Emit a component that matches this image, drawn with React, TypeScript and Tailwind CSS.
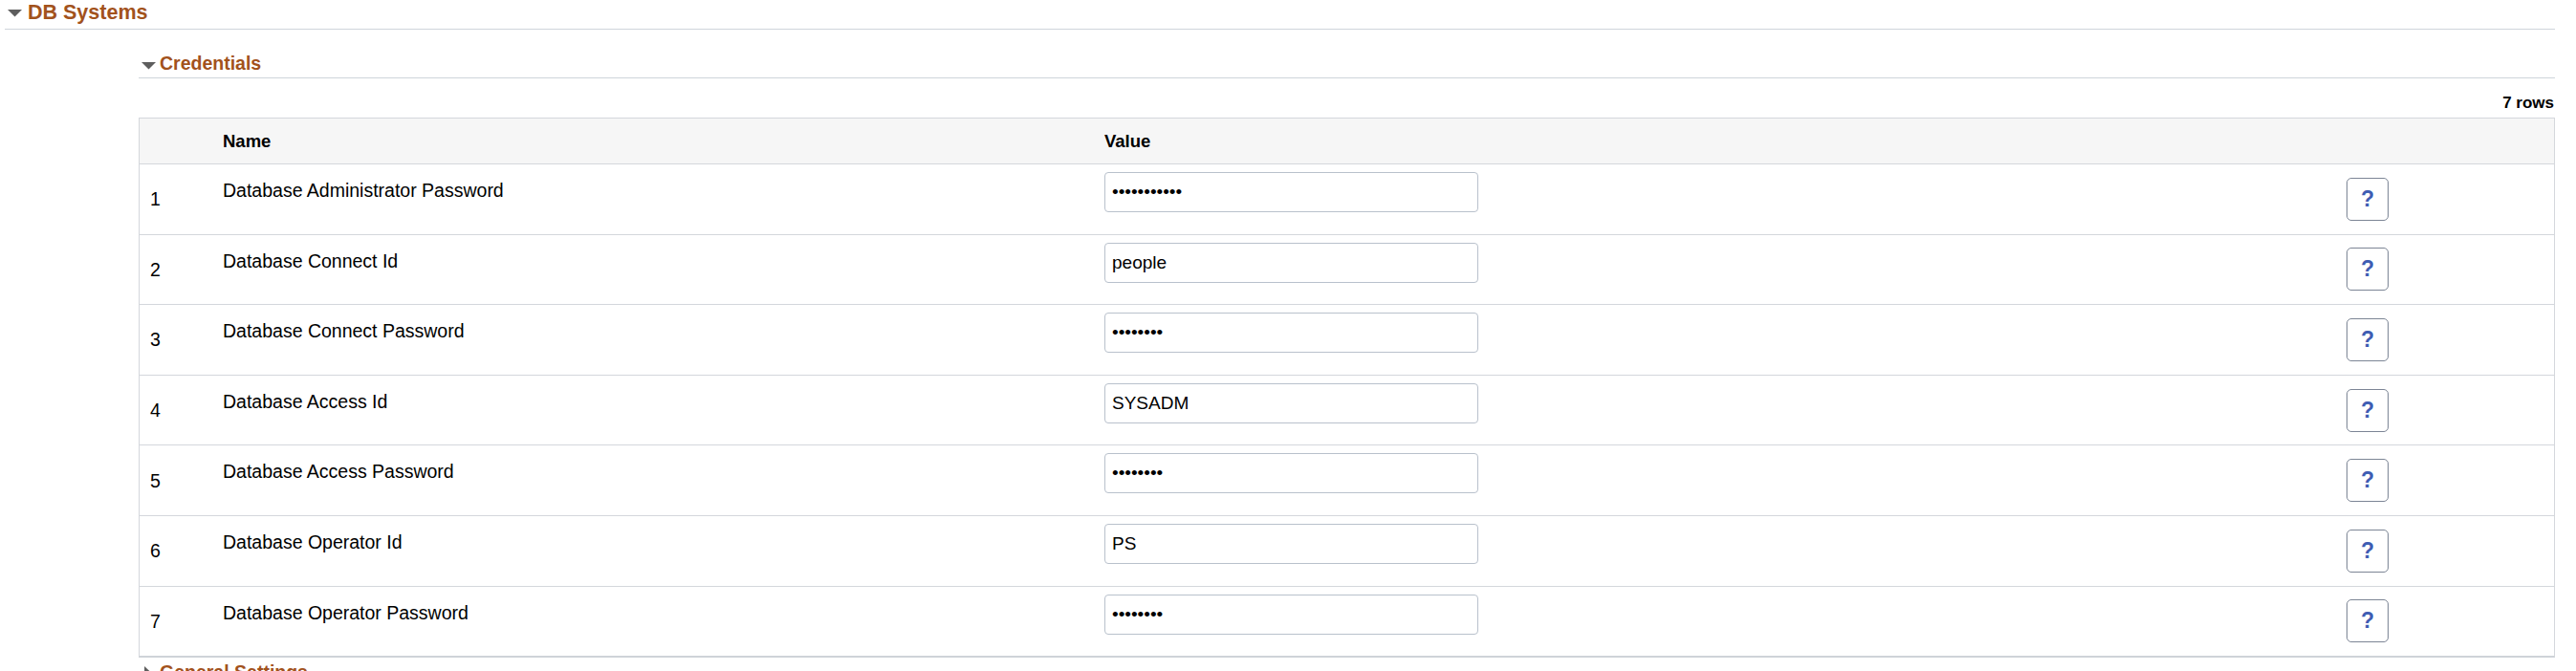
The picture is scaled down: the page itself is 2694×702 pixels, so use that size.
import type React from 'react'

type Row = { name: string; value: string; secret?: boolean }

const rows: Row[] = [
  { name: 'Database Administrator Password', value: 'xxxxxxxxxxx', secret: true },
  { name: 'Database Connect Id', value: 'people' },
  { name: 'Database Connect Password', value: 'xxxxxxxx', secret: true },
  { name: 'Database Access Id', value: 'SYSADM' },
  { name: 'Database Access Password', value: 'xxxxxxxx', secret: true },
  { name: 'Database Operator Id', value: 'PS' },
  { name: 'Database Operator Password', value: 'xxxxxxxx', secret: true },
]

const DownArrow: React.FC<{ className?: string }> = ({ className }) => (
  <svg width="15" height="8" viewBox="0 0 15 8" className={className}>
    <polygon points="0,0 15,0 7.5,7.5" fill="#5e5e5e" />
  </svg>
)

const RightArrow: React.FC<{ className?: string }> = ({ className }) => (
  <svg width="8" height="14" viewBox="0 0 8 14" className={className}>
    <polygon points="0,0 7.5,7 0,14" fill="#5e5e5e" />
  </svg>
)

const App: React.FC = () => {
  return (
    <div className="w-[2694px] h-[702px] overflow-hidden bg-white font-['Liberation_Sans',Arial,sans-serif] text-black">
      {/* DB Systems */}
      <div className="ml-[5px] w-[2667px] h-[31px] border-b border-[#cfd5db] pt-[1px] flex items-start">
        <DownArrow className="ml-[3px] mt-[9px]" />
        <span className="ml-[6px] text-[21.5px] leading-[24px] font-bold text-[#a2521c]">DB Systems</span>
      </div>

      <div className="ml-[145px] w-[2527px]">
        {/* Credentials */}
        <div className="mt-[24px] h-[27px] border-b border-[#cfd5db] flex items-start">
          <DownArrow className="ml-[3px] mt-[10px]" />
          <span className="ml-[4px] text-[19.5px] leading-[22px] font-bold text-[#a2521c]">Credentials</span>
        </div>

        <div className="mt-[16px] h-[20px] flex justify-end pr-[1px]">
          <span className="text-[17px] leading-[20px] font-bold">7 rows</span>
        </div>

        <div className="mt-[5px] border border-[#d4d7dc] border-b-2 border-b-[#cfd3d8]">
          <div className="grid grid-cols-[87px_922px_1299px_1fr] h-[47px] items-center bg-[#f6f6f6] text-[18.5px] font-bold">
            <div />
            <div>Name</div>
            <div>Value</div>
            <div />
          </div>

          {rows.map((row, i) => (
            <div
              key={row.name}
              className="grid grid-cols-[87px_922px_1299px_1fr] h-[73.6px] border-t border-[#d4d7dc] text-[19.5px]"
            >
              <div className="pl-[11px] self-center leading-[22px]">{i + 1}</div>
              <div className="pt-[16px] leading-[22px]">{row.name}</div>
              <div className="pt-[8px]">
                <input
                  readOnly
                  type={row.secret ? 'password' : 'text'}
                  value={row.value}
                  className="w-[391px] h-[42px] rounded-[4px] border border-[#b9c1cc] bg-white px-[7px] text-[19px] text-black outline-none font-['Liberation_Sans',Arial,sans-serif]"
                />
              </div>
              <div className="self-center">
                <button className="w-[44px] h-[45px] rounded-[5px] border border-[#7c8595] bg-white flex items-center justify-center text-[23px] font-bold text-[#3f5db3] leading-none">
                  ?
                </button>
              </div>
            </div>
          ))}
        </div>

        {/* General Settings (collapsed) */}
        <div className="mt-[4px] flex items-start">
          <RightArrow className="ml-[6px] mt-[5px]" />
          <span className="ml-[8px] text-[19.5px] leading-[22px] font-bold text-[#a2521c]">General Settings</span>
        </div>
      </div>
    </div>
  )
}

export default App
